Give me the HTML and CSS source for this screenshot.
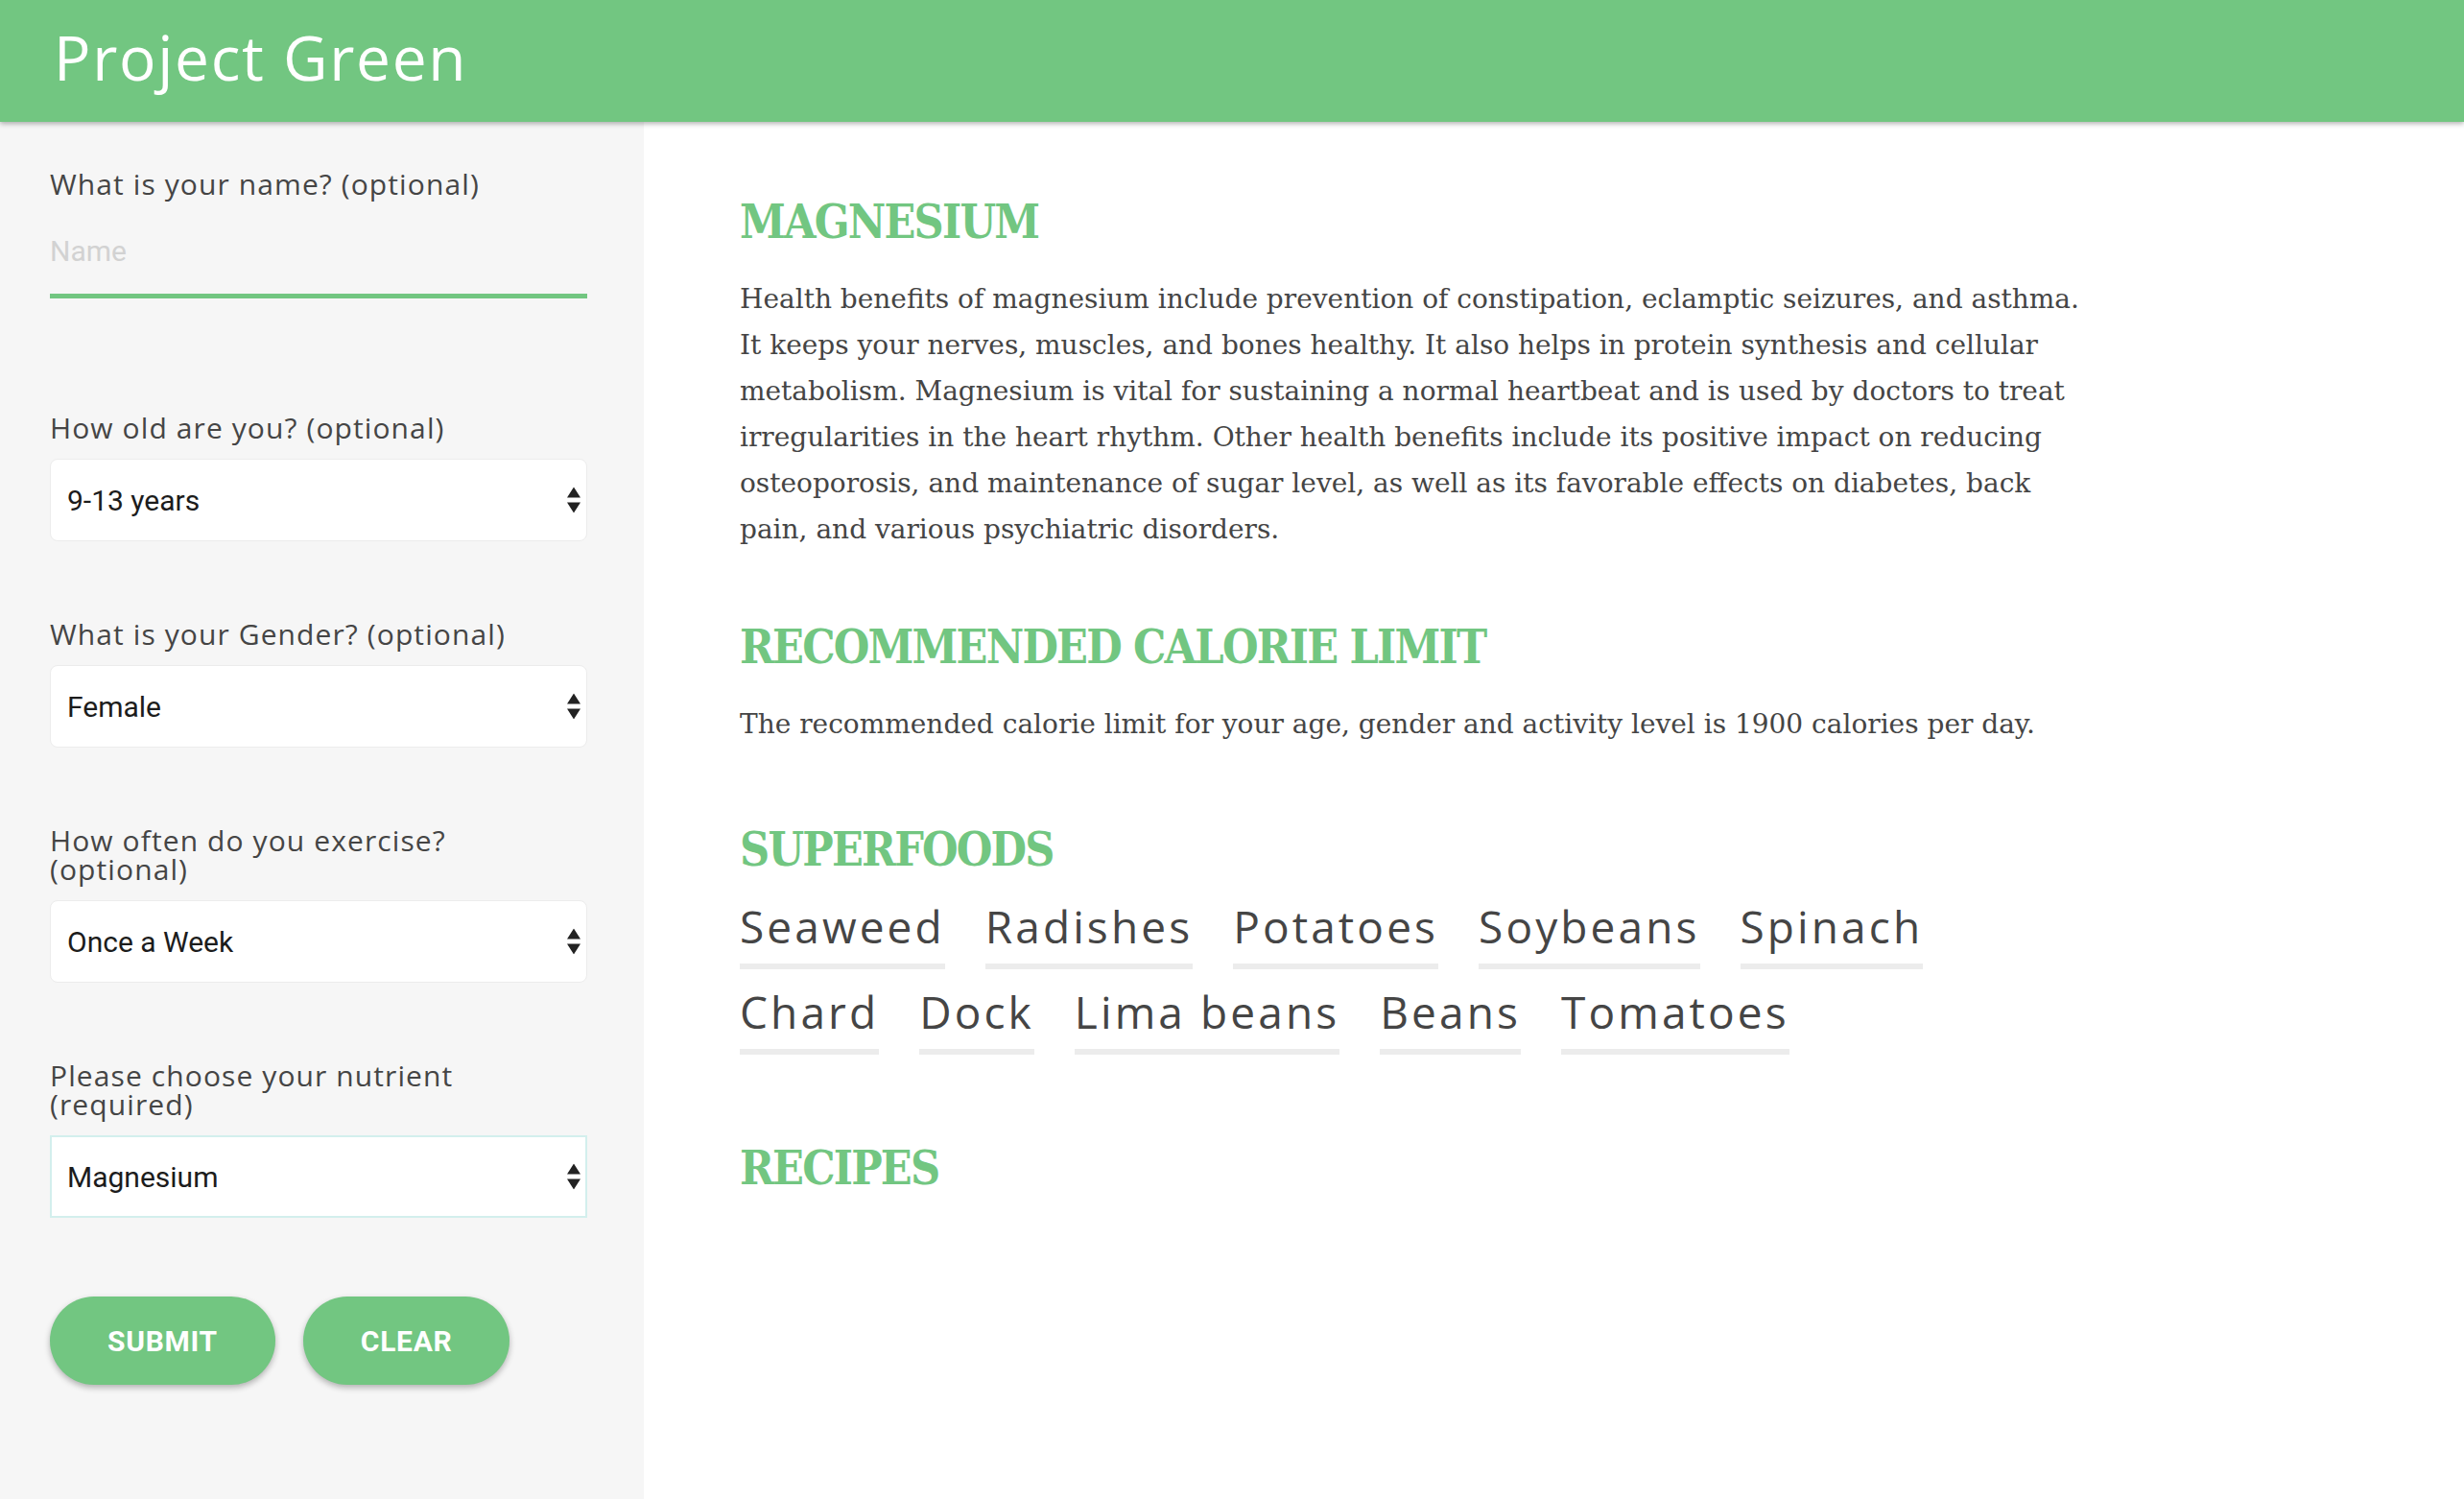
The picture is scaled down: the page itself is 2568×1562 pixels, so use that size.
FILE: index.html
```html
<!DOCTYPE html>
<html lang="en">
<head>
<meta charset="utf-8">
<title>Project Green</title>
<link rel="stylesheet" href="styles.css">
</head>
<body>
<div class="page">
  <header class="topbar">
    <h1 class="brand">Project Green</h1>
  </header>
  <div class="layout">
    <aside class="sidebar">
      <form class="form">
        <div class="field field-name">
          <label class="field-label" for="name">What is your name? (optional)</label>
          <input class="text-input" id="name" type="text" placeholder="Name">
        </div>
        <div class="field">
          <label class="field-label" for="age">How old are you? (optional)</label>
          <div class="select-wrap">
            <select class="select" id="age"><option>9-13 years</option></select>
            <svg class="select-arrows" width="14" height="27" viewBox="0 0 14 27" aria-hidden="true"><path d="M7 0L14 11H0Z M0 16H14L7 27Z" fill="#222"/></svg>
          </div>
        </div>
        <div class="field">
          <label class="field-label" for="gender">What is your Gender? (optional)</label>
          <div class="select-wrap">
            <select class="select" id="gender"><option>Female</option></select>
            <svg class="select-arrows" width="14" height="27" viewBox="0 0 14 27" aria-hidden="true"><path d="M7 0L14 11H0Z M0 16H14L7 27Z" fill="#222"/></svg>
          </div>
        </div>
        <div class="field">
          <label class="field-label" for="exercise">How often do you exercise? (optional)</label>
          <div class="select-wrap">
            <select class="select" id="exercise"><option>Once a Week</option></select>
            <svg class="select-arrows" width="14" height="27" viewBox="0 0 14 27" aria-hidden="true"><path d="M7 0L14 11H0Z M0 16H14L7 27Z" fill="#222"/></svg>
          </div>
        </div>
        <div class="field">
          <label class="field-label" for="nutrient">Please choose your nutrient (required)</label>
          <div class="select-wrap">
            <select class="select select-focus" id="nutrient"><option>Magnesium</option></select>
            <svg class="select-arrows" width="14" height="27" viewBox="0 0 14 27" aria-hidden="true"><path d="M7 0L14 11H0Z M0 16H14L7 27Z" fill="#222"/></svg>
          </div>
        </div>
        <div class="actions">
          <button class="btn" type="submit">Submit</button>
          <button class="btn" type="reset">Clear</button>
        </div>
      </form>
    </aside>
    <main class="content">
      <section class="section section-nutrient">
        <h2 class="section-title">MAGNESIUM</h2>
        <p class="text">Health benefits of magnesium include prevention of constipation, eclamptic seizures, and asthma.<br>It keeps your nerves, muscles, and bones healthy. It also helps in protein synthesis and cellular<br>metabolism. Magnesium is vital for sustaining a normal heartbeat and is used by doctors to treat<br>irregularities in the heart rhythm. Other health benefits include its positive impact on reducing<br>osteoporosis, and maintenance of sugar level, as well as its favorable effects on diabetes, back<br>pain, and various psychiatric disorders.</p>
      </section>
      <section class="section section-calorie">
        <h2 class="section-title">RECOMMENDED CALORIE LIMIT</h2>
        <p class="text">The recommended calorie limit for your age, gender and activity level is 1900 calories per day.</p>
      </section>
      <section class="section section-foods">
        <h2 class="section-title">SUPERFOODS</h2>
        <ul class="food-list">
          <li class="food">Seaweed</li>
          <li class="food">Radishes</li>
          <li class="food">Potatoes</li>
          <li class="food">Soybeans</li>
          <li class="food">Spinach</li>
          <li class="food">Chard</li>
          <li class="food">Dock</li>
          <li class="food">Lima beans</li>
          <li class="food">Beans</li>
          <li class="food">Tomatoes</li>
        </ul>
      </section>
      <section class="section section-recipes">
        <h2 class="section-title">RECIPES</h2>
      </section>
    </main>
  </div>
</div>
</body>
</html>
```

FILE: styles.css
```css
html, body {
  margin: 0;
  padding: 0;
  background: #ffffff;
}

.page {
  display: flex;
  flex-direction: column;
  min-height: 100vh;
}

.topbar {
  position: relative;
  z-index: 2;
  height: 127px;
  box-sizing: border-box;
  padding: 0 0 7px 56px;
  background: #72c681;
  box-shadow: 0 2px 5px rgba(0, 0, 0, 0.3);
}

.brand {
  margin: 0;
  font-family: "Open Sans", sans-serif;
  font-weight: 400;
  font-size: 64px;
  line-height: 120px;
  letter-spacing: 1.7px;
  color: #ffffff;
}

.layout {
  flex: 1;
  display: flex;
  align-items: stretch;
}

.sidebar {
  width: 671px;
  flex: 0 0 671px;
  box-sizing: border-box;
  padding: 50px 0 40px 52px;
  background: #f6f6f6;
}

.form {
  width: 560px;
}

.field {
  margin-bottom: 82px;
}

.field-name {
  margin-bottom: 120px;
}

.field-label {
  display: block;
  max-width: 520px;
  margin-bottom: 17px;
  font-family: "Open Sans", sans-serif;
  font-weight: 400;
  font-size: 30px;
  line-height: 30px;
  letter-spacing: 1.1px;
  color: #454545;
}

.field-name .field-label {
  margin-bottom: 0;
}

.text-input {
  display: block;
  width: 560px;
  height: 104px;
  box-sizing: border-box;
  margin: 0;
  padding: 37px 0 27px;
  border: none;
  border-bottom: 5px solid #72c681;
  background: transparent;
  font-family: Roboto, sans-serif;
  font-size: 30px;
  line-height: 35px;
  color: #333333;
  outline: none;
}

.text-input::placeholder {
  color: #d2d2d2;
}

.select-wrap {
  position: relative;
  width: 560px;
}

.select {
  display: block;
  width: 560px;
  height: 86px;
  box-sizing: border-box;
  margin: 0;
  padding: 0 40px 0 17px;
  -webkit-appearance: none;
  appearance: none;
  border: 1px solid #ececec;
  border-radius: 8px;
  background: #ffffff;
  font-family: Roboto, sans-serif;
  font-size: 30px;
  color: #1c1c1c;
  outline: none;
}

.select-focus {
  border: 2px solid #d3efed;
  border-radius: 0;
  padding-left: 16px;
}

.select-arrows {
  position: absolute;
  right: 7px;
  top: 50%;
  transform: translateY(-50%);
  pointer-events: none;
}

.actions {
  display: flex;
  gap: 29px;
}

.btn {
  height: 92px;
  padding: 0 60px;
  border: none;
  border-radius: 46px;
  background: #72c681;
  box-shadow: 0 3px 6px rgba(0, 0, 0, 0.28);
  font-family: Roboto, sans-serif;
  font-weight: 700;
  font-size: 30px;
  letter-spacing: 0.7px;
  text-transform: uppercase;
  color: #ffffff;
  cursor: pointer;
}

.content {
  flex: 1;
  box-sizing: border-box;
  padding: 74px 0 0 100px;
}

.section-title {
  margin: 0 0 27px;
  font-family: "DejaVu Serif Condensed", "DejaVu Serif", serif;
  font-stretch: condensed;
  font-weight: 700;
  font-size: 48px;
  line-height: 60px;
  letter-spacing: -1.8px;
  color: #72c681;
}

.text {
  margin: 0;
  font-family: "DejaVu Serif", serif;
  font-weight: 400;
  font-size: 28px;
  line-height: 48px;
  color: #454545;
}

.section-nutrient {
  margin-bottom: 68px;
}

.section-calorie {
  margin-bottom: 76px;
}

.section-foods {
  margin-bottom: 88px;
}

.food-list {
  display: flex;
  flex-wrap: wrap;
  column-gap: 42px;
  row-gap: 21px;
  max-width: 1380px;
  margin: 0;
  padding: 0;
  list-style: none;
}

.food {
  padding-bottom: 16px;
  border-bottom: 6px solid #ececec;
  font-family: "Open Sans", sans-serif;
  font-weight: 400;
  font-size: 46px;
  line-height: 46px;
  letter-spacing: 3.1px;
  color: #454545;
}
```
